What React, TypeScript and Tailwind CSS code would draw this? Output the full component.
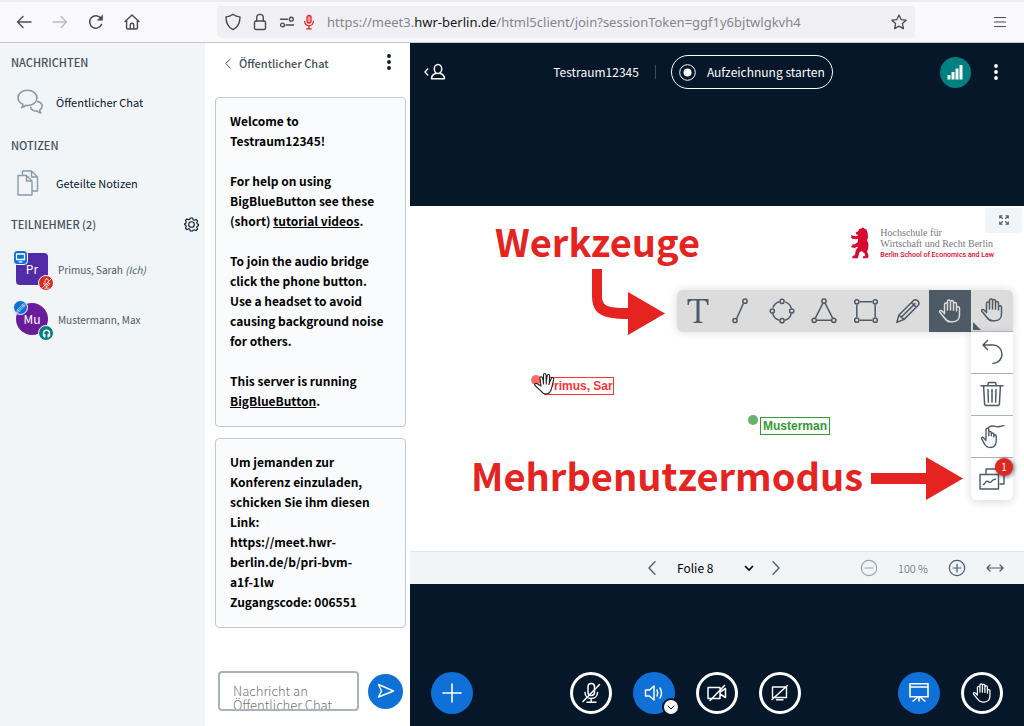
import React from "react";

type IconProps = { className?: string };

const stroke = {
  fill: "none",
  stroke: "currentColor",
  strokeLinecap: "round" as const,
  strokeLinejoin: "round" as const,
};

const ArrowBack = ({ className = "" }: IconProps) => (
  <svg className={className} width="16" height="16" viewBox="0 0 16 16" {...stroke} strokeWidth="1.4">
    <path d="M15 8H1.5M7 2.5 1.5 8 7 13.5" />
  </svg>
);

const Reload = () => (
  <svg width="16" height="16" viewBox="0 0 16 16" {...stroke} strokeWidth="1.5">
    <path d="M13.6 10.4A6.2 6.2 0 1 1 13 4.4" />
    <path d="M14.6 1.2v5h-5z" fill="currentColor" strokeWidth="0.6" />
  </svg>
);

const Home = () => (
  <svg width="16" height="16" viewBox="0 0 16 16" {...stroke} strokeWidth="1.4">
    <path d="M1 7.6 8 1l7 6.6M2.6 6.4V14q0 1 1 1h8.800q1 0 1-1V6.400M6.300 15v-4q0-1.700 1.700-1.700t1.700 1.700v4" />
  </svg>
);

const Shield = () => (
  <svg width="16" height="18" viewBox="0 0 16 18" {...stroke} strokeWidth="1.4">
    <path d="M8 1.200C10 2.800 12.400 3.700 15 3.900 15 10 12.800 14.300 8 16.600 3.200 14.300 1 10 1 3.900 3.600 3.700 6 2.800 8 1.200z" />
  </svg>
);

const Lock = () => (
  <svg width="14" height="18" viewBox="0 0 14 18" {...stroke} strokeWidth="1.4">
    <rect x="1.500" y="8" width="11" height="8.500" rx="1.500" />
    <path d="M3.700 8V4.700a3.300 3.300 0 0 1 6.600 0V8" />
  </svg>
);

const Permissions = () => (
  <svg width="16" height="12" viewBox="0 0 16 12" {...stroke} strokeWidth="1.400">
    <path d="M1.500 3.200h7M7 9h7.500" />
    <circle cx="12.300" cy="3.200" r="1.900" />
    <circle cx="3.500" cy="9" r="1.900" />
  </svg>
);

const RedMic = () => (
  <svg width="12" height="16" viewBox="0 0 12 16" {...stroke} strokeWidth="1.300">
    <rect x="4" y="1.500" width="4" height="7.500" rx="2" fill="#f3a0a0" />
    <path d="M1.700 7.500a4.300 4.300 0 0 0 8.600 0M6 12v2.500M3.700 14.800h4.600" />
  </svg>
);

const Star = () => (
  <svg width="16" height="16" viewBox="0 0 16 16" {...stroke} strokeWidth="1.300">
    <path d="m8 1 2.100 4.600 5 .6-3.700 3.400 1 5L8 12.100 3.600 14.600l1-5L.9 6.200l5-.6z" />
  </svg>
);

const ChatBubbles = () => (
  <svg width="26" height="26" viewBox="0 0 26 26" {...stroke} strokeWidth="1.600">
    <path d="M4.600 18.400c1-.9 1.400-1.900 1.300-3.200C2.800 13.700 1 11.600 1 8.900 1 4.700 5.200 1.200 10.500 1.200S20 4.700 20 8.900s-4.200 7.600-9.500 7.600c-.7 0-1.300 0-1.900-.1-1 1.100-2.300 1.800-4 2z" />
    <path d="M20.800 12.600c2.600.6 4.400 2.300 4.400 4.500 0 1.700-1 3.100-2.600 4 0 1.200.4 2.100 1.300 2.900-1.600-.1-2.900-.8-3.800-1.900-3.500.1-5.900-1.300-6.400-3.700" />
  </svg>
);

const Copy = () => (
  <svg width="22" height="26" viewBox="0 0 22 26" {...stroke} strokeWidth="1.400">
    <path d="M1 5.500h8.500l5.500 5.500v14H1zM9.500 5.500V11H15" />
    <path d="M5.500 5.300V1h9l6 6v14h-5.300M14.500 1v6h6" />
  </svg>
);

const Gear = () => (
  <svg width="15" height="15" viewBox="0 0 15 15" {...stroke} strokeWidth="1.100">
    <path d="M6.300 1h2.400l.4 1.700 1.400.6 1.500-.9 1.600 1.600-.9 1.500.6 1.400 1.200.3v1.600l-1.200.3-.6 1.400.9 1.500-1.600 1.600-1.500-.9-1.400.6L8.700 14H6.300l-.4-1.700-1.400-.6-1.500.9L1.400 11l.9-1.500-.6-1.400L.6 7.800V6.700l1.100-.3L2.300 5 1.400 3.500 3 1.900l1.500.9 1.400-.6z" />
    <circle cx="7.500" cy="7.500" r="2.800" />
  </svg>
);

const Chevron = ({ className = "" }: IconProps) => (
  <svg className={className} width="8" height="14" viewBox="0 0 8 14" {...stroke} strokeWidth="1.300">
    <path d="M7 .8 1 7l6 6.200" />
  </svg>
);

const Dots = () => (
  <svg width="6" height="18" viewBox="0 0 6 18" fill="currentColor">
    <circle cx="3" cy="3" r="1.900" />
    <circle cx="3" cy="9" r="1.900" />
    <circle cx="3" cy="15" r="1.900" />
  </svg>
);

const Send = () => (
  <svg width="18" height="16" viewBox="0 0 18 16" {...stroke} strokeWidth="1.400">
    <path d="M1.500 1.500 16.500 8l-15 6 3-6z" />
  </svg>
);

const HandIcon = ({ className = "", size = 24 }: IconProps & { size?: number }) => (
  <svg className={className} width={size} height={size} viewBox="0 0 24 24" {...stroke} strokeWidth="1.500">
    <path d="M6.500 14V5.400a1.500 1.500 0 0 1 3 0V11M9.500 5V2.600a1.500 1.500 0 0 1 3 0V11M12.500 3a1.500 1.500 0 0 1 3 0v8.300M15.500 5a1.500 1.500 0 0 1 3 0v7M18.500 9.300a1.500 1.500 0 0 1 3 0V16c0 4-2.800 6.800-6.800 6.800h-2c-2.600 0-4.300-1-5.700-3.300L1.800 13.300c-.8-1.500 1.100-2.500 2.200-1.300L6.500 14.600" />
  </svg>
);

const Marker = ({ cx, cy }: { cx: number; cy: number }) => (
  <circle cx={cx} cy={cy} r="2.100" fill="#dcdcdc" />
);

const LineTool = () => (
  <svg width="26" height="26" viewBox="0 0 26 26" {...stroke} strokeWidth="1.500">
    <path d="M9 22 17 4" />
    <Marker cx={8} cy={22.500} />
    <Marker cx={18} cy={3.200} />
  </svg>
);

const EllipseTool = () => (
  <svg width="26" height="26" viewBox="0 0 26 26" {...stroke} strokeWidth="1.500">
    <circle cx="13" cy="13" r="9.700" strokeDasharray="9.200 6.040" strokeDashoffset="-3.020" strokeLinecap="butt" />
    <Marker cx={13} cy={3.300} />
    <Marker cx={13} cy={22.700} />
    <Marker cx={3.300} cy={13} />
    <Marker cx={22.700} cy={13} />
  </svg>
);

const TriangleTool = () => (
  <svg width="26" height="26" viewBox="0 0 26 26" {...stroke} strokeWidth="1.500">
    <path d="M11.500 6.200 4.700 19.300M14.500 6.200l6.800 13.100M6.500 22.300h13" />
    <Marker cx={13} cy={3.200} />
    <Marker cx={3.200} cy={22.300} />
    <Marker cx={22.800} cy={22.300} />
  </svg>
);

const RectangleTool = () => (
  <svg width="26" height="26" viewBox="0 0 26 26" {...stroke} strokeWidth="1.500">
    <path d="M7.300 3.800h11.400M7.300 22.200h11.400M3.800 7.300v11.400M22.200 7.300v11.400" />
    <Marker cx={3.800} cy={3.800} />
    <Marker cx={22.200} cy={3.800} />
    <Marker cx={3.800} cy={22.200} />
    <Marker cx={22.200} cy={22.200} />
  </svg>
);

const PencilTool = ({ size = 26 }: { size?: number }) => (
  <svg width={size} height={size} viewBox="0 0 26 26" {...stroke} strokeWidth="1.500">
    <path d="M1.800 24.300 4 17 18.500 2.500c2.600-2.400 7 1.800 4.700 4.700L8.800 21.600zM4 17l4.800 4.600M16.500 4.600l4.700 4.700M6.500 19 20 5.600" />
  </svg>
);

const TextTool = () => (
  <svg width="24" height="26" viewBox="0 0 24 26" fill="currentColor">
    <path d="M1.500 1h21v6h-1.300c-.3-3-1.300-4.400-4-4.400h-3.700v18.900c0 1.900.6 2.300 3 2.500V25H7.500v-1c2.400-.2 3-.6 3-2.500V2.600H6.800c-2.700 0-3.700 1.400-4 4.400H1.500z" />
  </svg>
);

const Undo = () => (
  <svg width="24" height="26" viewBox="0 0 24 26" {...stroke} strokeWidth="1.500">
    <path d="M7.500 1.500 3 6l4.500 4.500M3.300 6H13c5.200 0 9 4 9 9.200 0 5-3.800 9-9 9.300" />
  </svg>
);

const Trash = () => (
  <svg width="24" height="26" viewBox="0 0 24 26" {...stroke} strokeWidth="1.500">
    <path d="M1 4.700h22M8 4.500V3q0-1.500 1.500-1.500h5Q16 1.500 16 3v1.500M3.600 5l1 18q.1 1.600 1.600 1.600h11.600q1.500 0 1.600-1.600l1-18M8 8.500l.4 12.500M12 8.500V21M16 8.500 15.600 21" />
  </svg>
);

const MultiPointer = () => (
  <svg width="26" height="26" viewBox="0 0 26 26" {...stroke} strokeWidth="1.400">
    <path d="M7 16V6.700a1.400 1.400 0 0 1 2.800 0v6M9.800 12V9.600a1.200 1.200 0 0 1 2.500 0v3.200M12.300 11.300a1.200 1.200 0 0 1 2.500 0v2.600M14.800 13a1.200 1.200 0 0 1 2.400 0v4.500c0 4.500-2.400 7-6 7-2.800 0-4.300-.9-5.500-3.200l-3-5.400c-.6-1.500.9-2.100 1.800-1.100L7 17.600" />
    <path d="M9.500 4.300c4.500-2.600 6-.8 8.500-.5 2.400.3 4.500-1.200 7-1.200" />
  </svg>
);

const MultiBoard = () => (
  <svg width="26" height="24" viewBox="0 0 26 24" {...stroke} strokeWidth="1.400">
    <path d="M7 7V2h18v15h-4" />
    <rect x="1" y="7.500" width="18.500" height="14.500" />
    <path d="M4.500 17.500c1.200-.2 2-3.700 3.800-3.300 1.600.4 2 2 3.600.8s2.300-3 4.600-2.800" />
  </svg>
);

const UserToggle = () => (
  <svg width="22" height="18" viewBox="0 0 22 18" {...stroke} strokeWidth="1.500">
    <path d="M3.700 6 1 9l2.700 3" />
    <ellipse cx="14" cy="6" rx="3.700" ry="4.500" />
    <path d="M11.500 10.500c-2.700.9-4 2.400-4 5.300h13c0-2.900-1.300-4.400-4-5.300" />
  </svg>
);

const Signal = () => (
  <svg width="16" height="16" viewBox="0 0 16 16" fill="#fff">
    <path d="M.5 11h3v4.500h-3zM4.500 8h3v7.500h-3zM8.500 4.500h3v11h-3zM12.500 1h3v14.500h-3z" />
  </svg>
);

const Fullscreen = () => (
  <svg width="10" height="10" viewBox="0 0 10 10" {...stroke} strokeWidth="1.100">
    <path d="M.7 3V.7H3M7 .7h2.300V3M9.300 7v2.300H7M3 9.300H.7V7M1 1l2.500 2.500M9 1 6.500 3.500M9 9 6.500 6.500M1 9l2.500-2.500" />
  </svg>
);

const MicOff = ({ size = 22 }: { size?: number }) => (
  <svg width={size} height={size} viewBox="0 0 22 22" {...stroke} strokeWidth="1.500">
    <rect x="8" y="1.500" width="6.500" height="12" rx="3.200" />
    <path d="M5 10.500c0 8 12.500 8 12.500 0M11.200 16.700V20M7 20.300h9M19.500 2.500 3 19.500" />
  </svg>
);

const Speaker = () => (
  <svg width="20" height="18" viewBox="0 0 20 18" {...stroke} strokeWidth="1.500">
    <path d="M1.500 6h4L10 2v14l-4.500-4h-4zM13 6q1.500 3 0 6M16 4q3 5 0 10" />
  </svg>
);

const CameraOff = () => (
  <svg width="22" height="18" viewBox="0 0 22 18" {...stroke} strokeWidth="1.500">
    <path d="M2 3.500h12v11H2zM14 8l5.500-3.500v9L14 10M18.500 1.500 4 16.500" />
  </svg>
);

const ScreenOff = () => (
  <svg width="20" height="18" viewBox="0 0 20 18" {...stroke} strokeWidth="1.400">
    <path d="M2.500 3h14v10.500h-14zM6.500 15.700h6.500M17.500 1.500 2 15.500" />
  </svg>
);

const Board = () => (
  <svg width="22" height="22" viewBox="0 0 22 22" fill="none" stroke="currentColor" strokeWidth="1.600">
    <path d="M2 1.800h18v13H2zM2 5h18M11 15v4.500M9.500 15.500l-5 4M12.500 15.500l5 4" />
  </svg>
);

const Bear = () => (
  <svg width="20" height="32" viewBox="0 0 20 32" fill="#d8092f">
    <path d="M9 2.200 11 1.500 13 .3l1.500 1.500 2 .8 1.300 4 .2 4.200-1 2.200 1.500 4-.3 4.500-1.200 3 1.700 4.500-1 2.200h-5l.5-2 2-.3-.5-2.500-3-2.500-2.200 1.300-.8 2.700-.8 3.300H2l.7-2.200L5 28l.7-4.500L8 20l-1.500-.3L5 21l-3.200-.5L1 18.700l1.500.2L2 17.300l2.500.3L7.700 15l.5-3.200-2.700.5L4 11.800l-1.500.5L2 11l-1.300-.2.800-1.300L.8 8.200l2.500.6 3 .4L8.500 8 6 7.200 5.700 5.500 8 4.500z" />
  </svg>
);

const CursorHand = () => (
  <svg width="22" height="23" viewBox="0 0 22 23" fill="#fff" stroke="#222" strokeWidth="1.100" strokeLinejoin="round">
    <path d="M7 14 6 6.500c-.3-2 2-2.400 2.500-.6l.9 4.200L9.500 3c0-2 2.300-2 2.500 0l.3 7 .9-6.300c.3-1.800 2.500-1.500 2.400.3l-.3 7 2-4.500c.7-1.600 2.800-1 2.400.9l-2 8.300c-.7 3.600-2.500 6.300-5.700 6.300-2.800 0-4-1.500-5.500-3.400L1 13.500c-1-1.500.9-2.700 2.200-1.700z" />
    <path d="M9.400 10v2.500M12.300 10v2.500M15.300 11l-.4 2" fill="none" />
  </svg>
);

const sidebarHeading = "text-[11px] leading-4 font-medium text-[#434f5b]";
const roundOutline =
  "flex size-[42px] items-center justify-center rounded-full border-[3px] border-white text-white";
const roundBlue = "flex size-[42px] items-center justify-center rounded-full bg-[#0f70d7] text-white";
const messageBox =
  "rounded-sm border border-[#bfc9d2] bg-[#fafbfc] pt-[13px] pb-[15px] pl-[14px] pr-3 text-[12px] leading-5 font-bold text-black";
const toolCell = "flex size-[42px] items-center justify-center";
const slideTitle = "absolute text-[38px] leading-[60px] font-bold text-[#e52320]";

function BrowserBar() {
  return (
    <header className="flex h-[43px] shrink-0 items-center border-t-2 border-b border-t-[#ededf0] border-b-[#c8c8cd] bg-[#f9f9fb] pr-[17px] pl-4 text-[#4a4a52]">
      <nav className="flex items-center gap-5" aria-label="Browser">
        <button aria-label="Zurück"><ArrowBack /></button>
        <button aria-label="Vor"><ArrowBack className="rotate-180 text-[#bbbbc0]" /></button>
        <button aria-label="Neu laden"><Reload /></button>
        <button aria-label="Startseite"><Home /></button>
      </nav>
      <div className="ml-[77px] flex h-8 min-w-0 flex-1 items-center rounded bg-[#f0f0f4] pr-2 pl-2">
        <div className="flex items-center gap-3">
          <Shield />
          <Lock />
          <Permissions />
        </div>
        <span className="ml-2 text-[#e02424]"><RedMic /></span>
        <p className="ml-3 flex-1 truncate font-['Noto_Sans',sans-serif] text-[13px] leading-5 text-[#85858c]">
          https://meet3.<span className="text-[#15141a]">hwr-berlin.de</span>/html5client/join?sessionToken=ggf1y6bjtwlgkvh4
        </p>
        <button aria-label="Lesezeichen"><Star /></button>
      </div>
      <button aria-label="Menü" className="ml-[78px]">
        <svg width="14" height="12" viewBox="0 0 14 12" {...stroke} strokeWidth="1.200">
          <path d="M1.500 1.500h11M1.500 6h11M1.500 10.500h11" />
        </svg>
      </button>
    </header>
  );
}

function Sidebar() {
  return (
    <aside className="w-[205px] shrink-0 bg-[#f1f5f8] pt-[11px] text-[#06172a]">
      <h2 className={`${sidebarHeading} pl-[11px]`}>NACHRICHTEN</h2>
      <button className="mt-[11px] flex h-[42px] items-center pl-[17px] text-[11px] leading-5">
        <span className="mr-[13px] text-[#8b9aa8]"><ChatBubbles /></span>
        Öffentlicher Chat
      </button>
      <h2 className={`${sidebarHeading} mt-[14px] pl-[11px]`}>NOTIZEN</h2>
      <button className="mt-[9px] flex h-[42px] items-center pl-[17px] text-[11px] leading-5">
        <span className="mr-[17px] text-[#8b9aa8]"><Copy /></span>
        Geteilte Notizen
      </button>
      <div className="mt-3 flex items-center justify-between pr-[6px] pl-[11px]">
        <h2 className={sidebarHeading}>TEILNEHMER (2)</h2>
        <button aria-label="Teilnehmer verwalten"><Gear /></button>
      </div>
      <ul className="mt-3 text-[10px] text-[#4e5a66]">
        <li className="flex h-[50px] items-center pl-4">
          <div className="relative flex size-8 items-center justify-center rounded bg-[#522ba8] text-[12px] text-white">
            Pr
            <span className="absolute -top-[3px] -left-[3px] flex size-[15px] items-center justify-center rounded border border-white bg-[#0f70d7]">
              <svg width="11" height="10" viewBox="0 0 11 10" {...stroke} strokeWidth="1.300">
                <path d="M1.500 1h8v5.500h-8zM4 8.800h3" />
              </svg>
            </span>
            <span className="absolute -right-[6px] -bottom-[6px] flex size-[16px] items-center justify-center rounded-full border border-white bg-[#df2721]">
              <MicOff size={11} />
            </span>
          </div>
          <span className="ml-2.5">Primus, Sarah <i>(Ich)</i></span>
        </li>
        <li className="flex h-[50px] items-center pl-4">
          <div className="relative flex size-8 items-center justify-center rounded-full bg-[#6a1b9a] text-[12px] text-white">
            Mu
            <span className="absolute -top-[3px] -left-[3px] flex size-[15px] items-center justify-center rounded-full border border-white bg-[#0f70d7]">
              <PencilTool size={10} />
            </span>
            <span className="absolute -right-[6px] -bottom-[6px] flex size-[16px] items-center justify-center rounded-full border border-white bg-[#008081]">
              <svg width="9" height="9" viewBox="0 0 9 9" {...stroke} strokeWidth="1.400">
                <path d="M1.500 7V4.200a3 3 0 0 1 6 0V7M2.800 5.500V8M6.200 5.500V8" />
              </svg>
            </span>
          </div>
          <span className="ml-2.5">Mustermann, Max</span>
        </li>
      </ul>
    </aside>
  );
}

function ChatPanel() {
  return (
    <section className="flex w-[205px] shrink-0 flex-col bg-white">
      <div className="flex h-[54px] items-start justify-between pt-[10px] pr-[18px] pl-5">
        <button className="flex items-center gap-2 text-[11px] leading-5 font-medium text-[#434f5b]">
          <Chevron className="h-[11px] w-[6px]" />
          Öffentlicher Chat
        </button>
        <button aria-label="Chat-Optionen" className="text-[#06172a]"><Dots /></button>
      </div>
      <div className="flex flex-1 flex-col gap-[11px] pr-1 pl-[10px]">
        <div className={messageBox}>
          <p>Welcome to<br />Testraum12345!</p>
          <p className="mt-5">For help on using BigBlueButton see these (short) <a href="#videos" className="underline">tutorial videos</a>.</p>
          <p className="mt-5">To join the audio bridge click the phone button.<br />Use a headset to avoid causing background noise for others.</p>
          <p className="mt-5">This server is running <a href="#bbb" className="underline">BigBlueButton</a>.</p>
        </div>
        <div className={messageBox}>
          <p>Um jemanden zur Konferenz einzuladen, schicken Sie ihm diesen<br />Link:<br />https://meet.hwr-<br />berlin.de/b/pri-bvm-<br />a1f-1lw<br />Zugangscode: 006551</p>
        </div>
      </div>
      <form className="flex items-center gap-[9px] pr-[7px] pb-[15px] pl-[13px]">
        <textarea
          aria-label="Nachricht"
          placeholder="Nachricht an Öffentlicher Chat"
          className="h-10 min-w-0 flex-1 resize-none overflow-hidden rounded border-2 border-[#a7b3bd] pt-[11px] pr-2 pl-[13px] text-[13px] leading-[14px] font-light text-black placeholder:text-[#757575]"
        />
        <button type="button" aria-label="Senden" className="flex size-[35px] items-center justify-center rounded-full bg-[#0f70d7] text-white">
          <Send />
        </button>
      </form>
    </section>
  );
}

function Whiteboard() {
  return (
    <div className="relative aspect-video w-full overflow-hidden bg-white">
      <p className={`${slideTitle} top-[5px] left-[85px]`}>Werkzeuge</p>
      <p className={`${slideTitle} top-[239px] left-[61px]`}>Mehrbenutzermodus</p>
      <svg className="absolute top-[63px] left-[181px]" width="75" height="66" viewBox="0 0 75 66" fill="#e52320">
        <path d="M1 0h10v26c0 11 4 13 26 13V23l37 21.500L37 66V50C9 50 1 44 1 26z" />
      </svg>
      <svg className="absolute top-[251px] left-[461px]" width="92" height="43" viewBox="0 0 92 43" fill="#e52320">
        <path d="M0 16h55V0l37 21.500L55 43V27H0z" />
      </svg>

      <div className="absolute top-[21px] right-[30px] flex items-start">
        <Bear />
        <div className="ml-[10px]">
          <p className="font-['Liberation_Serif',serif] text-[10px] leading-[11px] text-[#77787b]">Hochschule für<br />Wirtschaft und Recht Berlin</p>
          <p className="mt-px font-[Roboto,sans-serif] text-[7px] leading-[11px] font-medium text-[#d8092f]">Berlin School of Economics and Law</p>
        </div>
      </div>
      <button aria-label="Vollbild" className="absolute top-[2px] right-[2px] flex h-[25px] w-[37px] items-center justify-center rounded-xs bg-[#f1f5f8] text-[#4e5a66]">
        <Fullscreen />
      </button>

      <span className="absolute top-[169px] left-[121px] size-[10px] rounded-full bg-[#ff6b6b]" />
      <p className="absolute top-[171px] left-[134px] h-[18px] w-[70px] overflow-hidden border border-[#f33] pl-px font-['Liberation_Sans',sans-serif] text-[12px] leading-4 font-bold whitespace-nowrap text-[#f33]">Primus, Sar</p>
      <span className="absolute top-[166px] left-[124px]"><CursorHand /></span>
      <span className="absolute top-[209px] left-[338px] size-[10px] rounded-full bg-[#66b266]" />
      <p className="absolute top-[211px] left-[350px] h-[18px] w-[70px] overflow-hidden border border-[#393] pl-[2px] font-['Liberation_Sans',sans-serif] text-[12px] leading-4 font-bold whitespace-nowrap text-[#393]">Musterman</p>

      <div className="absolute top-[84px] right-[11px] flex flex-col items-end text-[#4e5a66]">
        <div className="flex rounded-md rounded-br-none bg-[#dcdcdc] shadow-[0_0_10px_rgba(0,0,0,0.15)]">
          <button aria-label="Text" className={toolCell}><TextTool /></button>
          <button aria-label="Linie" className={toolCell}><LineTool /></button>
          <button aria-label="Ellipse" className={toolCell}><EllipseTool /></button>
          <button aria-label="Dreieck" className={toolCell}><TriangleTool /></button>
          <button aria-label="Rechteck" className={toolCell}><RectangleTool /></button>
          <button aria-label="Stift" className={toolCell}><PencilTool /></button>
          <button aria-label="Verschieben" className={`${toolCell} bg-[#4e5a66] text-[#dcdcdc]`}><HandIcon /></button>
          <button aria-label="Werkzeuge" className={`${toolCell} relative border-b border-[#a7b3bd]`}>
            <HandIcon />
            <svg className="absolute bottom-px left-[2px]" width="8" height="8" viewBox="0 0 8 8" fill="currentColor"><path d="M0 0v8h8z" /></svg>
          </button>
        </div>
        <div className="flex flex-col rounded-b-md bg-white shadow-[0_2px_10px_rgba(0,0,0,0.15)]">
          <button aria-label="Rückgängig" className={`${toolCell} border-b border-[#a7b3bd]`}><Undo /></button>
          <button aria-label="Löschen" className={`${toolCell} border-b border-[#a7b3bd]`}><Trash /></button>
          <button aria-label="Mehrbenutzerzeiger" className={`${toolCell} border-b border-[#a7b3bd]`}><MultiPointer /></button>
          <button aria-label="Mehrbenutzermodus" className={`${toolCell} relative`}>
            <MultiBoard />
            <span className="absolute top-0 right-0 flex size-[18px] items-center justify-center rounded-full bg-[#df2721] text-[10px] leading-none text-white shadow-[1px_1px_4px_rgba(0,0,0,0.6)]">1</span>
          </button>
        </div>
      </div>
    </div>
  );
}

function SlideControls() {
  return (
    <div className="grid h-[33px] grid-cols-[1fr_auto_1fr] items-center border-t border-[#dfe6eb] bg-[#f1f5f8] text-[#4e5a66]">
      <div />
      <div className="mr-1.5 flex items-center">
        <button aria-label="Vorherige Folie"><Chevron /></button>
        <div className="relative ml-[21px] flex items-center">
          <select aria-label="Folie" className="w-[77px] appearance-none bg-transparent text-[12px] leading-5 text-black">
            <option>Folie 8</option>
          </select>
          <svg className="pointer-events-none absolute right-0" width="10" height="7" viewBox="0 0 10 7" fill="none" stroke="#000" strokeWidth="1.600"><path d="m1 1 4 4 4-4" /></svg>
        </div>
        <button aria-label="Nächste Folie" className="ml-[18px]"><Chevron className="rotate-180" /></button>
      </div>
      <div className="flex items-center justify-end pr-5">
        <button aria-label="Verkleinern" className="text-[#9aa4ad]">
          <svg width="18" height="18" viewBox="0 0 18 18" {...stroke} strokeWidth="1.200"><circle cx="9" cy="9" r="7.700" /><path d="M5 9h8" /></svg>
        </button>
        <span className="w-[70px] text-center text-[11px] font-light">100 %</span>
        <button aria-label="Vergrößern">
          <svg width="18" height="18" viewBox="0 0 18 18" {...stroke} strokeWidth="1.200"><circle cx="9" cy="9" r="7.700" /><path d="M5 9h8M9 5v8" /></svg>
        </button>
        <button aria-label="An Breite anpassen" className="ml-5">
          <svg width="18" height="10" viewBox="0 0 18 10" {...stroke} strokeWidth="1.200"><path d="M1 5h16M4 2 1 5l3 3M14 2l3 3-3 3" /></svg>
        </button>
      </div>
    </div>
  );
}

function Meeting() {
  return (
    <main className="flex min-w-0 flex-1 flex-col bg-[#06172a] text-white">
      <div className="mb-[29px] flex h-[58px] items-center justify-between pr-[25px] pl-[14px]">
        <button aria-label="Teilnehmerliste"><UserToggle /></button>
        <div className="flex items-center">
          <h1 className="text-[12px] leading-5">Testraum12345</h1>
          <span className="mr-[15px] ml-4 h-[14px] w-px bg-[#3c4a5a]" />
          <button className="flex h-[34px] items-center gap-[11px] rounded-full border border-white px-[7px] text-[12px] leading-5">
            <svg width="17" height="17" viewBox="0 0 17 17" fill="none" stroke="#fff">
              <circle cx="8.500" cy="8.500" r="7.800" />
              <circle cx="8.500" cy="8.500" r="4" fill="#fff" stroke="none" />
            </svg>
            Aufzeichnung starten
          </button>
        </div>
        <div className="flex items-center gap-[22px]">
          <button aria-label="Verbindungsstatus" className="flex size-[31px] items-center justify-center rounded-full bg-[#008081]"><Signal /></button>
          <button aria-label="Optionen"><Dots /></button>
        </div>
      </div>
      <div className="flex flex-1 flex-col justify-center">
        <Whiteboard />
        <SlideControls />
      </div>
      <div className="flex h-[66px] items-center justify-between px-[21px]">
        <button aria-label="Aktionen" className={roundBlue}>
          <svg width="20" height="20" viewBox="0 0 20 20" {...stroke} strokeWidth="1.600"><path d="M10 1v18M1 10h18" /></svg>
        </button>
        <div className="flex gap-[21px]">
          <button aria-label="Stummschalten" className={roundOutline}><MicOff /></button>
          <div className="relative">
            <button aria-label="Audio" className={roundBlue}><Speaker /></button>
            <button aria-label="Audiogerät wählen" className="absolute -right-[5px] -bottom-[2px] flex size-[18px] items-center justify-center rounded-full border-2 border-[#06172a] bg-white text-[#06172a]">
              <svg width="8" height="5" viewBox="0 0 8 5" {...stroke} strokeWidth="1"><path d="m1 1 3 3 3-3" /></svg>
            </button>
          </div>
          <button aria-label="Kamera" className={roundOutline}><CameraOff /></button>
          <button aria-label="Bildschirm teilen" className={roundOutline}><ScreenOff /></button>
        </div>
        <div className="flex gap-[21px]">
          <button aria-label="Präsentation" className={roundBlue}><Board /></button>
          <button aria-label="Hand heben" className={roundOutline}><HandIcon size={20} /></button>
        </div>
      </div>
    </main>
  );
}

export default function App() {
  return (
    <div className="flex min-h-screen flex-col font-['Noto_Sans_CJK_SC',sans-serif]">
      <BrowserBar />
      <div className="flex flex-1">
        <Sidebar />
        <ChatPanel />
        <Meeting />
      </div>
    </div>
  );
}
